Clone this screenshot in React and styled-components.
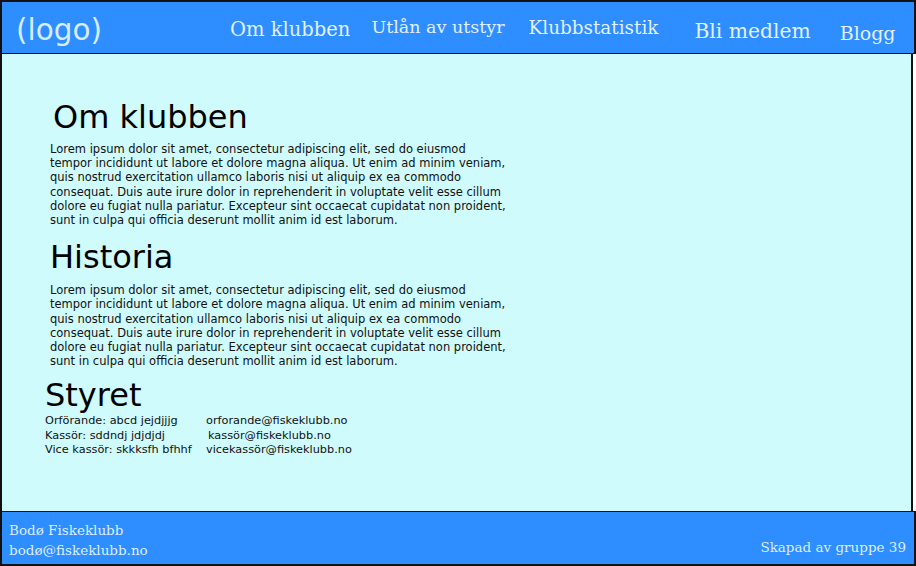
import React from "react";
import styled, { createGlobalStyle } from "styled-components";

const lorem = [
  "Lorem ipsum dolor sit amet, consectetur adipiscing elit, sed do eiusmod",
  "tempor incididunt ut labore et dolore magna aliqua. Ut enim ad minim veniam,",
  "quis nostrud exercitation ullamco laboris nisi ut aliquip ex ea commodo",
  "consequat. Duis aute irure dolor in reprehenderit in voluptate velit esse cillum",
  "dolore eu fugiat nulla pariatur. Excepteur sint occaecat cupidatat non proident,",
  "sunt in culpa qui officia deserunt mollit anim id est laborum.",
];

const links = [
  { label: "Om klubben", size: 19.5, gap: 0, drop: -1 },
  { label: "Utlån av utstyr", size: 17.5, gap: 21, drop: -3 },
  { label: "Klubbstatistik", size: 18.4, gap: 24, drop: -3 },
  { label: "Bli medlem", size: 20.3, gap: 36, drop: 1 },
  { label: "Blogg", size: 19, gap: 29, drop: 3 },
];

const board = [
  ["Orförande: abcd jejdjjjg", "orforande@fiskeklubb.no"],
  ["Kassör: sddndj jdjdjdj", "kassör@fiskeklubb.no"],
  ["Vice kassör: skkksfh bfhhf", "vicekassör@fiskeklubb.no"],
];

const Paragraph = ({ spaced }) => (
  <Text spaced={spaced}>
    {lorem.map((line, i) => (
      <Line key={i}>{line}</Line>
    ))}
  </Text>
);

const App = () => {
  return (
    <>
      <GlobalStyle />
      <Frame>
        <Header>
          <Logo>(logo)</Logo>
          <Nav>
            {links.map((l, i) => (
              <NavLink key={i} size={l.size} gap={l.gap} drop={l.drop}>
                {l.label}
              </NavLink>
            ))}
          </Nav>
        </Header>
        <Main>
          <Section indent={50}>
            <Heading shift={3}>Om klubben</Heading>
            <Paragraph />
          </Section>
          <Section indent={50} top={11}>
            <Heading shift={-1}>Historia</Heading>
            <Paragraph spaced />
          </Section>
          <Section indent={45} top={8}>
            <Heading>Styret</Heading>
            <Board>
              {board.map(([who, mail], i) => (
                <React.Fragment key={i}>
                  <span>{who}</span>
                  <Mail nudge={i === 1 ? 2 : 0}>{mail}</Mail>
                </React.Fragment>
              ))}
            </Board>
          </Section>
        </Main>
        <Footer>
          <FooterInfo>
            <span>Bodø Fiskeklubb</span>
            <span>bodø@fiskeklubb.no</span>
          </FooterInfo>
          <Credit>Skapad av gruppe 39</Credit>
        </Footer>
      </Frame>
    </>
  );
};

export default App;

const GlobalStyle = createGlobalStyle`
  body {
    margin: 0;
    background: #ffffff;
    font-family: "DejaVu Sans", sans-serif;
  }
`;

const Frame = styled.div`
  width: 916px;
  height: 566px;
  display: flex;
  flex-direction: column;
  box-sizing: border-box;
`;

const Header = styled.header`
  height: 54px;
  box-sizing: border-box;
  border: 2px solid #111;
  border-bottom-width: 1px;
  background: #2e8dff;
  display: flex;
  align-items: center;
  padding-left: 14px;
`;

const Logo = styled.div`
  font-family: "DejaVu Sans", sans-serif;
  font-size: 29.5px;
  color: #d6ecff;
  margin-top: 5px;
`;

const Nav = styled.nav`
  display: flex;
  align-items: center;
  margin-left: 128px;
  margin-top: 5px;
`;

const NavLink = styled.a`
  font-family: "DejaVu Serif", serif;
  font-size: ${(p) => p.size}px;
  color: #e2f1ff;
  margin-left: ${(p) => p.gap}px;
  position: relative;
  top: ${(p) => p.drop}px;
  white-space: nowrap;
`;

const Main = styled.main`
  flex: 1;
  margin-right: 3px;
  background: #cffbfd;
  border-left: 2px solid #111;
  border-right: 2px solid #111;
  padding-top: 44px;
`;

const Section = styled.section`
  padding-left: ${(p) => p.indent - 2}px;
  margin-top: ${(p) => p.top || 0}px;
`;

const Heading = styled.h2`
  margin: 0;
  font-weight: normal;
  font-size: 32px;
  line-height: 38px;
  color: #000;
  padding-left: ${(p) => p.shift || 0}px;
`;

const Text = styled.p`
  margin: ${(p) => (p.spaced ? "7px" : "6px")} 0 0;
  font-size: 11.5px;
  line-height: 14.2px;
  color: #111;
`;

const Line = styled.span`
  display: block;
  white-space: nowrap;
`;

const Board = styled.div`
  display: grid;
  grid-template-columns: 161px auto;
  justify-content: start;
  font-size: 11.3px;
  line-height: 14.5px;
  color: #111;
`;

const Mail = styled.span`
  padding-left: ${(p) => p.nudge}px;
`;

const Footer = styled.footer`
  height: 55px;
  box-sizing: border-box;
  border: 2px solid #111;
  border-top-width: 1px;
  background: #2e8dff;
  display: flex;
  justify-content: space-between;
  align-items: flex-end;
  padding: 0 8px 4px 7px;
  font-family: "DejaVu Serif", serif;
  color: #dcefff;
`;

const FooterInfo = styled.div`
  display: flex;
  flex-direction: column;
  font-size: 13.5px;
  line-height: 20px;
`;

const Credit = styled.div`
  font-size: 13.5px;
  line-height: 20px;
  margin-bottom: 3px;
`;
